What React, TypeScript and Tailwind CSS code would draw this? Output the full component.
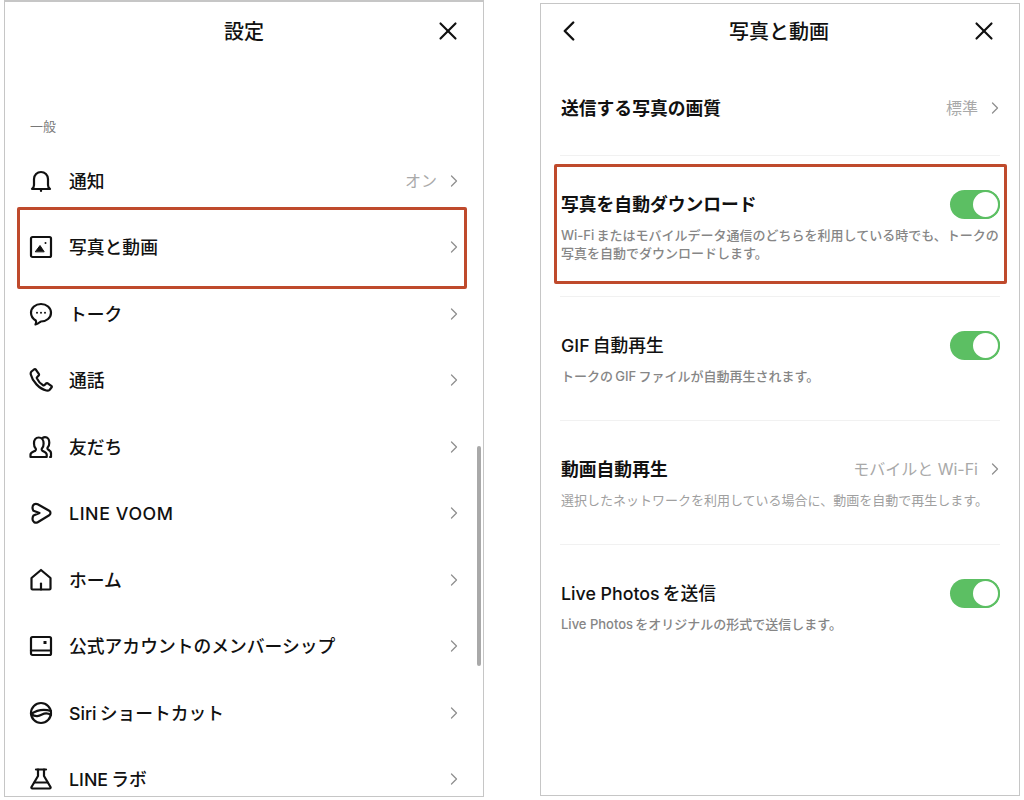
import React from 'react';
import { ChevronRight, X, ChevronLeft } from 'lucide-react';

const FONT = 'font-["Inter","Noto_Sans_CJK_JP",sans-serif]';

const ICON_PROPS = {
  width: 24,
  height: 24,
  viewBox: '0 0 24 24',
  fill: 'none',
  stroke: '#111',
  strokeWidth: 2.2,
  strokeLinecap: 'round' as const,
  strokeLinejoin: 'round' as const,
};

const BellIcon = () => (
  <svg {...ICON_PROPS}>
    <path d="M3 20h18c-1.500-1-2-2-2-4v-6a7 7 0 0 0-14 0v6c0 2-.5 3-2 4z" />
    <path d="M12 20v2" />
  </svg>
);

const PhotoIcon = () => (
  <svg {...ICON_PROPS}>
    <rect x="2" y="2" width="20" height="20" rx="1.500" />
    <path d="M6.500 16.500 11 10.500l4 6z" fill="#111" strokeWidth={1} />
    <circle cx="16.500" cy="8" r="1" fill="#111" stroke="none" />
  </svg>
);

const TalkIcon = () => (
  <svg {...ICON_PROPS}>
    <path d="M12 2c5.500 0 10 3.800 10 8.800s-4.500 8.700-10 8.700c-1 0-1.800 2-5.500 3 .8-1.500.8-3 .3-4C4.200 17 2 14 2 10.800 2 5.800 6.500 2 12 2z" />
    <circle cx="8" cy="10.800" r="1" fill="#111" stroke="none" />
    <circle cx="12" cy="10.800" r="1" fill="#111" stroke="none" />
    <circle cx="16" cy="10.800" r="1" fill="#111" stroke="none" />
  </svg>
);

const PhoneIcon = () => (
  <svg {...ICON_PROPS}>
    <path d="M5 1.500 2.500 3.500c-.7.700-1 1.700-.7 3 1.500 6.500 8.500 14.500 15.500 16 1.500.3 2.600 0 3.400-.8l1.800-2.200c.4-.5.300-1.200-.2-1.600l-3.600-2.600c-.5-.3-1.100-.3-1.500.1l-1.600 1.600c-.4.400-1 .5-1.500.2-2.500-1.400-5-4.200-6.200-6.800-.2-.5-.1-1 .3-1.400l1.500-1.600c.4-.4.400-1 .1-1.500L7 1.800c-.5-.6-1.400-.7-2-.3z" />
  </svg>
);

const FriendsIcon = () => (
  <svg {...ICON_PROPS}>
    <path d="M1.500 22v-2.500c0-2 3.500-3 4.800-3.800.8-.6.800-1.700.2-2.400-1-1.100-1.500-2.500-1.500-4.800C4.800 5 6.800 2.500 9.700 2.500s4.900 2.500 4.900 6c0 2.300-.5 3.700-1.500 4.800-.6.700-.6 1.800.2 2.400 1.300.8 4.400 1.800 4.400 3.800V22z" />
    <path d="M13.500 3c.8-.5 1.600-.8 2.500-.8 2.600 0 4.300 2.300 4.300 5.500 0 2-.5 3.500-1.500 4.500-.6.700-.5 1.700.2 2.200 1.100.8 3 1.800 3 3.600V22h-1" />
  </svg>
);

const VoomIcon = () => (
  <svg {...ICON_PROPS}>
    <path d="M3.500 6.500c0-3 2.800-4.500 5.200-3.200l11.500 6.500c1.700 1 1.700 3.400 0 4.400L8.700 21.200C6.300 22.500 3.500 21 3.500 18c0-1.500.3-2.500 1-3.500l6-2.500-6-2.200c-.7-1-1-2-1-3.300z" />
  </svg>
);

const HomeIcon = () => (
  <svg {...ICON_PROPS}>
    <path d="M12 2 2.500 10v10.500c0 .6.400 1 1 1h17c.6 0 1-.4 1-1V10z" />
    <path d="M12 21.500v-6" />
  </svg>
);

const MemberIcon = () => (
  <svg {...ICON_PROPS}>
    <rect x="2" y="3" width="20" height="18" rx="1.500" />
    <path d="M2 16.500h20" />
    <rect x="14.500" y="7" width="3" height="3" fill="#111" stroke="none" />
  </svg>
);

const SiriIcon = () => (
  <svg {...ICON_PROPS}>
    <circle cx="12" cy="12" r="10" />
    <path d="M2 13C8 9 15 8 22 10" />
    <path d="M2 13c5 3.500 8 2 11 0.500s6-1.500 9 0.500" />
  </svg>
);

const LabIcon = () => (
  <svg {...ICON_PROPS}>
    <path d="M7 2.500h10" />
    <path d="M9 2.500V9L2.500 20c-.4.800 0 1.500.9 1.500h17.200c.9 0 1.300-.7.900-1.500L15 9V2.500" />
    <path d="M5.500 15.500h13" />
  </svg>
);

const MENU = [
  { icon: <BellIcon />, label: '通知', value: 'オン' },
  { icon: <PhotoIcon />, label: '写真と動画' },
  { icon: <TalkIcon />, label: 'トーク' },
  { icon: <PhoneIcon />, label: '通話' },
  { icon: <FriendsIcon />, label: '友だち' },
  { icon: <VoomIcon />, label: 'LINE VOOM', latin: true },
  { icon: <HomeIcon />, label: 'ホーム' },
  { icon: <MemberIcon />, label: '公式アカウントのメンバーシップ' },
  { icon: <SiriIcon />, label: 'Siri\u2009ショートカット' },
  { icon: <LabIcon />, label: 'LINE\u2009ラボ' },
];

const Chevron = () => <ChevronRight size={20} strokeWidth={1.5} className="text-[#8f8f8f] -mr-[5px] ml-[7px] shrink-0" />;

const Toggle = () => (
  <div className="w-[50px] h-[29px] rounded-full bg-[#5cbf63] flex justify-end shrink-0">
    <div className="w-[29px] h-[29px] rounded-full bg-white border-2 border-[#5cbf63]" />
  </div>
);

const SettingRow = ({ title, desc, right, bold, muted, className }: { title: string; desc: string; right: React.ReactNode; bold?: boolean; muted?: boolean; className: string }) => (
  <div className={`border-b border-[#f1f1f1] pt-[34px] ${className}`}>
    <div className="flex items-center justify-between h-[28px]">
      <span className={`ml-[1px] mt-[1px] text-[17.800px] leading-[28px] text-[#111] ${bold ? 'font-bold' : 'font-medium'}`}>{title}</span>
      {right}
    </div>
    <p className={`ml-[1px] mt-[8px] text-[13px] leading-[18px] whitespace-pre-line ${muted ? 'text-[#a0a0a0]' : 'text-[#868686] font-medium'}`}>{desc}</p>
  </div>
);

export default function App() {
  return (
    <div className={`w-[1024px] h-[800px] bg-white overflow-hidden flex items-start ${FONT}`}>
      {/* settings list */}
      <div className="relative ml-[4px] w-[480px] h-[797px] border border-t-2 border-[#c6c6c6] overflow-hidden shrink-0">
        <div className="relative h-[57px] flex items-center justify-center">
          <span className="text-[20px] font-medium text-[#111] mt-[2px]">設定</span>
          <X size={30} strokeWidth={1.700} className="absolute right-[20px] top-[14px] text-[#111]" />
        </div>
        <div className="mt-[58px] pl-[25px] h-[18px] text-[13px] leading-[18px] text-[#777]">一般</div>
        <div className="mt-[12.500px] pl-[24px] pr-[24px]">
          {MENU.map(item => (
            <div key={item.label} className="flex items-center h-[66.5px]">
              <div className="w-[24px] h-[24px] shrink-0">{item.icon}</div>
              <span className={`ml-[16px] mt-[3px] text-[17.800px] font-medium text-[#111] flex-1 ${item.latin ? 'tracking-[0.6px]' : ''}`}>{item.label}</span>
              {item.value && <span className="text-[16px] text-[#a9a9a9]">{item.value}</span>}
              <Chevron />
            </div>
          ))}
        </div>
        {/* highlight and scrollbar lie over the list */}
        <div className="absolute left-[12px] top-[205px] w-[450px] h-[82px] border-[3px] border-[#bf4a2c] rounded-[2px]" />
        <div className="absolute left-[472px] top-[444px] w-[4px] h-[220px] rounded-full bg-[#a9a9a9]" />
      </div>

      {/* photo and video settings */}
      <div className="relative ml-[56px] mt-[3px] w-[480px] h-[793px] border border-[#c6c6c6] overflow-hidden shrink-0 px-[19px]">
        <div className="relative h-[56px] flex items-center justify-center -mx-[19px]">
          <span className="text-[20px] font-medium text-[#111] -ml-[2px]">写真と動画</span>
          <ChevronLeft size={34} strokeWidth={1.700} className="absolute left-[11px] top-[10px] text-[#111]" />
          <X size={30} strokeWidth={1.700} className="absolute right-[20px] top-[12px] text-[#111]" />
        </div>
        <div className="border-b border-[#f1f1f1] h-[96px] pt-[34px]">
          <div className="flex items-center justify-between h-[28px]">
            <span className="ml-[1px] mt-[3px] text-[17.800px] font-bold text-[#111]">送信する写真の画質</span>
            <div className="flex items-center">
              <span className="text-[16px] text-[#a9a9a9]">標準</span>
              <Chevron />
            </div>
          </div>
        </div>
        <SettingRow
          bold
          className="h-[141px]"
          title="写真を自動ダウンロード"
          desc={'Wi-Fi\u2009またはモバイルデータ通信のどちらを利用している時でも、トークの\n写真を自動でダウンロードします。'}
          right={<Toggle />}
        />
        <SettingRow className="h-[124px]" title={'GIF\u2009自動再生'} desc={'トークの\u2009GIF\u2009ファイルが自動再生されます。'} right={<Toggle />} />
        <SettingRow
          bold
          muted
          className="h-[124px]"
          title="動画自動再生"
          desc="選択したネットワークを利用している場合に、動画を自動で再生します。"
          right={
            <div className="flex items-center">
              <span className="text-[16px] text-[#a9a9a9]">モバイルと Wi-Fi</span>
              <Chevron />
            </div>
          }
        />
        <SettingRow className="h-[124px] border-b-0" title={'Live Photos\u2009を送信'} desc={'Live Photos\u2009をオリジナルの形式で送信します。'} right={<Toggle />} />
        <div className="absolute left-[13px] top-[160px] w-[453px] h-[120px] border-[3px] border-[#bf4a2c] rounded-[2px]" />
      </div>
    </div>
  );
}
